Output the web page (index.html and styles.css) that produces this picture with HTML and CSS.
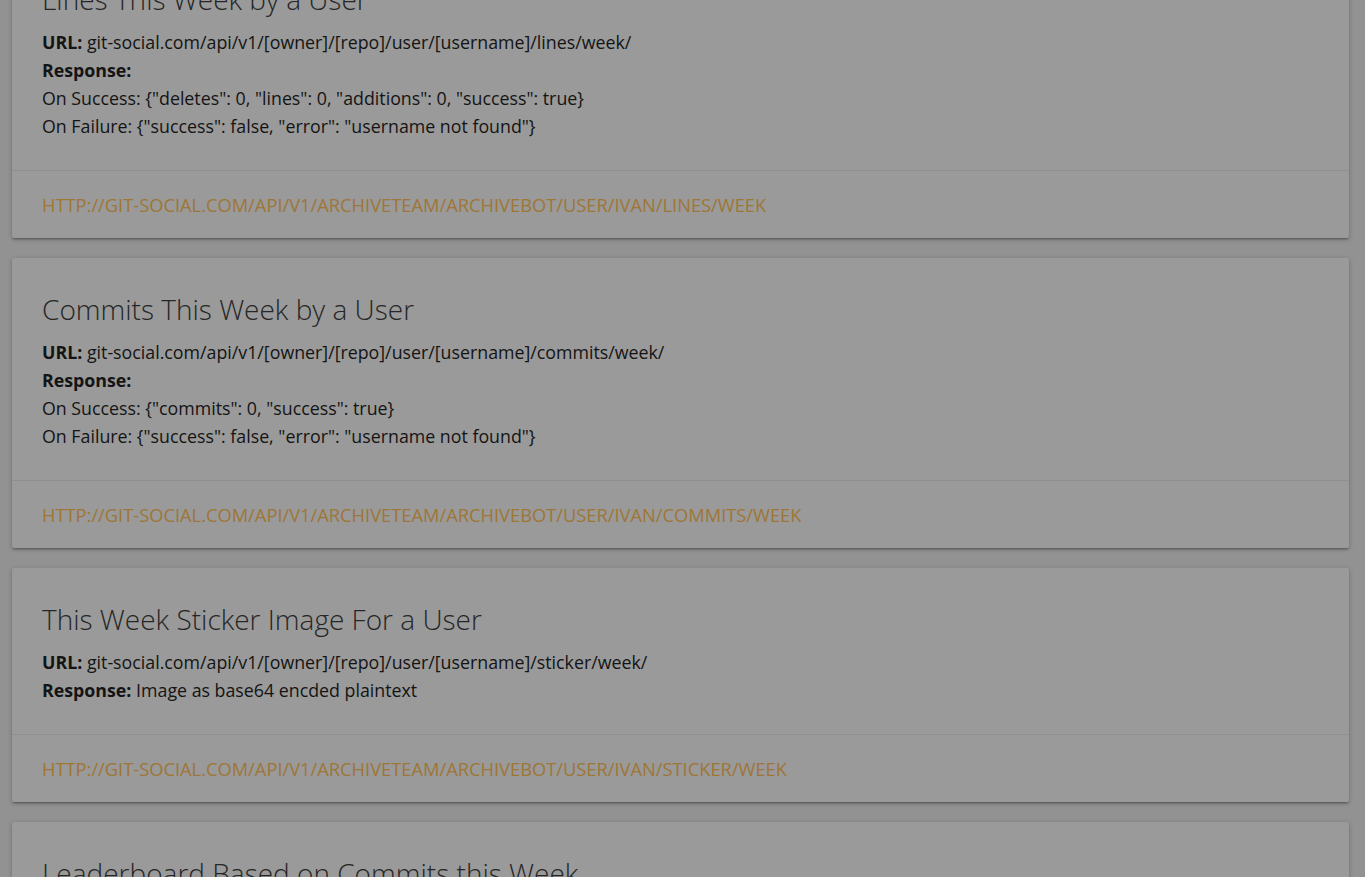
FILE: index.html
```html
<!DOCTYPE html>
<html lang="en">
<head>
<meta charset="utf-8">
<title>git-social API</title>
<link rel="stylesheet" href="styles.css">
</head>
<body>
<main class="list">
  <section class="card">
    <div class="card-content">
      <h2 class="card-title">Lines This Week by a User</h2>
      <p><b>URL:</b> git-social.com/api/v1/[owner]/[repo]/user/[username]/lines/week/</p>
      <p><b>Response:</b></p>
      <p>On Success: {"deletes": 0, "lines": 0, "additions": 0, "success": true}</p>
      <p>On Failure: {"success": false, "error": "username not found"}</p>
    </div>
    <div class="card-action"><a href="#">http://git-social.com/api/v1/archiveteam/archivebot/user/ivan/lines/week</a></div>
  </section>
  <section class="card">
    <div class="card-content">
      <h2 class="card-title">Commits This Week by a User</h2>
      <p><b>URL:</b> git-social.com/api/v1/[owner]/[repo]/user/[username]/commits/week/</p>
      <p><b>Response:</b></p>
      <p>On Success: {"commits": 0, "success": true}</p>
      <p>On Failure: {"success": false, "error": "username not found"}</p>
    </div>
    <div class="card-action"><a href="#">http://git-social.com/api/v1/archiveteam/archivebot/user/ivan/commits/week</a></div>
  </section>
  <section class="card">
    <div class="card-content">
      <h2 class="card-title">This Week Sticker Image For a User</h2>
      <p><b>URL:</b> git-social.com/api/v1/[owner]/[repo]/user/[username]/sticker/week/</p>
      <p><b>Response:</b> Image as base64 encded plaintext</p>
    </div>
    <div class="card-action"><a href="#">http://git-social.com/api/v1/archiveteam/archivebot/user/ivan/sticker/week</a></div>
  </section>
  <section class="card">
    <div class="card-content">
      <h2 class="card-title">Leaderboard Based on Commits this Week</h2>
      <p><b>URL:</b> git-social.com/api/v1/[owner]/[repo]/leaderboard/commits/week/</p>
      <p><b>Response:</b></p>
    </div>
  </section>
</main>
</body>
</html>
```
FILE: styles.css
```css
html, body {
  margin: 0;
  padding: 0;
  background: #929292;
  overflow: hidden;
}
body {
  font-family: "Open Sans", "Noto Sans", sans-serif;
  color: #141414;
}
.list {
  display: flex;
  flex-direction: column;
  gap: 20px;
  margin-top: -52px;
  padding: 0 16px 0 12px;
}
.card {
  background: #9a9a9a;
  border-radius: 2px;
  box-shadow: 0 2px 2px 0 rgba(0,0,0,0.14), 0 3px 1px -2px rgba(0,0,0,0.12), 0 1px 5px 0 rgba(0,0,0,0.2);
}
.card-content {
  padding: 30px;
}
.card-title {
  margin: 0 0 8px;
  font-size: 28px;
  line-height: 42px;
  font-weight: 300;
  color: #262626;
}
.card-content p {
  margin: 0;
  font-size: 17.8px;
  line-height: 28px;
}
.card-content b {
  font-weight: 700;
}
.card-action {
  border-top: 1px solid #8e8e8e;
  padding: 16px 30px 15px;
}
.card-action a {
  display: block;
  line-height: 36px;
  font-size: 18.3px;
  text-transform: uppercase;
  color: #9e7636;
  text-decoration: none;
}
```
